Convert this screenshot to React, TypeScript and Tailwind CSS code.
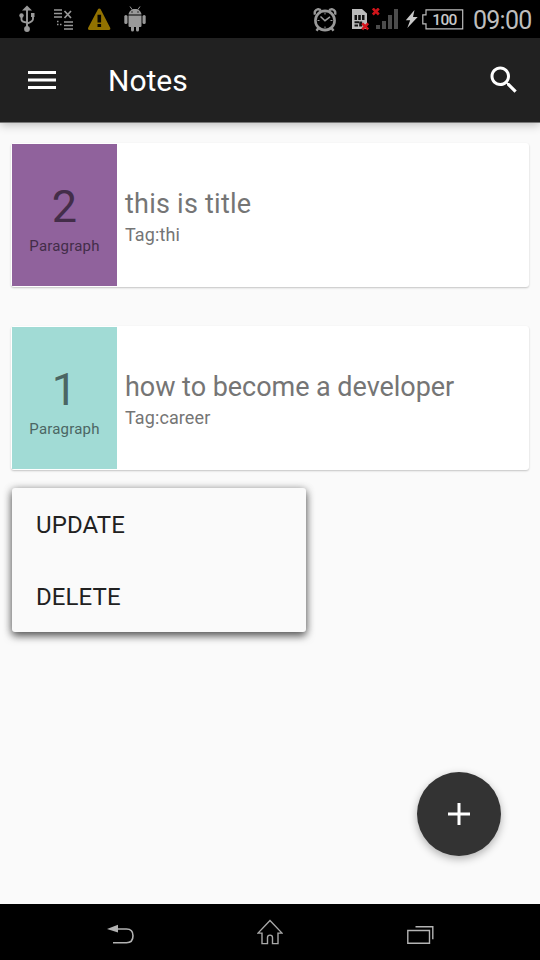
import React from "react";

const notes = [
  { count: 2, title: "this is title", tag: "thi", tile: "bg-[#90629c]", ink: "text-[#432d49]", spacing: "tracking-[0.24px]" },
  { count: 1, title: "how to become a developer", tag: "career", tile: "bg-[#a1dbd5]", ink: "text-[#4b6663]", spacing: "tracking-[-0.04px]" },
];

function UsbIcon() {
  return (
    <svg className="ml-[19px] h-7 w-4 shrink-0" viewBox="0 0 16 28" fill="#999" stroke="#999">
      <path d="M8 4v20M2.5 11v3.5q0 2.5 5.5 3M14 11v3q0 2.5-6 4.5" fill="none" strokeWidth="1.9" />
      <path d="M8 .5 13 5.5H3z" stroke="none" />
      <circle cx="8" cy="24" r="2.9" stroke="none" />
      <circle cx="2.5" cy="10.5" r="2.2" stroke="none" />
      <path d="M12 8h3.5v4H12z" stroke="none" />
    </svg>
  );
}

function TransferIcon() {
  return (
    <svg className="ml-[18px] mt-[2px] h-6 w-5 shrink-0" viewBox="0 0 20 24" stroke="#999" fill="none">
      <path d="M1 2h8M1 5.5h8M1 9h8M11 14h9M11 17.5h9M11 21h9" strokeWidth="1.6" />
      <path d="m11.5 3 6.5 7m0-7-6.5 7" strokeWidth="1.7" />
      <path d="M4 13.5h1.5M4 16.5h1.5M7 16.5h1.5" strokeWidth="1.5" />
    </svg>
  );
}

function WarningIcon() {
  return (
    <svg className="ml-[14px] h-[23px] w-6 shrink-0" viewBox="0 0 24 23">
      <path d="M12.3 2 21.8 20.5H2.5z" fill="#927200" stroke="#927200" strokeWidth="3" strokeLinejoin="round" />
      <path d="M10.5 6.7h3.6v7.8h-3.6zM10.5 16h3.6v3h-3.6z" fill="#080600" />
    </svg>
  );
}

function AndroidIcon() {
  return (
    <svg className="ml-[13px] h-[26px] w-[22px] shrink-0" viewBox="0 0 22 26" fill="#999">
      <path d="M4.5 8.5C5 5 7.5 3 11 3s6 2 6.5 5.5z" />
      <path d="m6 .5 2.2 3.2M16 .5l-2.2 3.2" stroke="#999" strokeWidth="1" />
      <path d="M4.5 9.5h13v10.2q0 1.2-1.2 1.2H15V24a1.5 1.5 0 0 1-3 0v-3.1h-2V24a1.5 1.5 0 0 1-3 0v-3.1H5.7q-1.2 0-1.2-1.2z" />
      <rect x=".3" y="9" width="3.2" height="9" rx="1.6" />
      <rect x="18.5" y="9" width="3.2" height="9" rx="1.6" />
      <circle cx="8" cy="6" r=".8" fill="#222" />
      <circle cx="14" cy="6" r=".8" fill="#222" />
    </svg>
  );
}

function AlarmIcon() {
  return (
    <svg className="ml-[167px] mt-[2px] h-6 w-6 shrink-0" viewBox="0 0 24 24" fill="none" stroke="#999">
      <circle cx="12" cy="12.5" r="9.6" strokeWidth="2.6" />
      <path d="M2 6.7Q.7 2.3 5.2 1.2L8 2.2M22 6.7q1.3-4.4-3.2-5.5L16 2.2" strokeWidth="2.4" />
      <path d="m7.5 8.5 4.5 4.2 5-3.8" strokeWidth="1.5" />
      <path d="M12 4.5v2M12 18.5v2M4.5 12.5h2M17.5 12.5h2" strokeWidth="1" />
      <path d="m5.5 20-2 2.8M18.5 20l2 2.8" strokeWidth="2.4" />
    </svg>
  );
}

function SimIcon() {
  return (
    <svg className="ml-[15px] h-[23px] w-[18px] shrink-0" viewBox="0 0 18 23">
      <path d="M0 1h10l5 4.5V21H0z" fill="#bcbcbc" />
      <path d="M2.5 7H5v5H2.5zM6.2 7h2.6v5H6.2zM10 7h2.5v5H10zM2.5 13.2H7v2H2.5zM2.5 16.5H6v2H2.5zM7.2 13.5h3v5h-3z" fill="#111" />
      <path d="m10.2 15.3 6 6m0-6-6 6" stroke="#d4141b" strokeWidth="2.6" />
    </svg>
  );
}

function SignalIcon() {
  return (
    <svg className="ml-[2px] h-[23px] w-[27px] shrink-0" viewBox="0 0 27 23">
      <path d="M4 17h4v4H4zM10 13h4v8h-4zM16 7h4v14h-4zM22 1h4v20h-4z" fill="#4c4c4c" />
      <path d="m.8 .5 6 6m0-6-6 6" stroke="#cf141a" strokeWidth="2.6" />
    </svg>
  );
}

function BatteryIcon() {
  return (
    <>
      <svg className="ml-[6px] h-5 w-[13px] shrink-0" viewBox="0 0 13 20" fill="#cacaca">
        <path d="M9.5 1 .8 11.2h4.4L2.3 19 12.7 8H8z" />
      </svg>
      <svg className="ml-[4px] h-[21px] w-[42px] shrink-0" viewBox="0 0 42 21">
        <path d="M4 .8h36.7v19H4v-5H.8v-9H4z" fill="none" stroke="#bdbdbd" strokeWidth="1.2" />
        <text x="22.5" y="16" textAnchor="middle" className="font-[Roboto,sans-serif] text-[15.5px] font-medium tracking-[-0.6px]" fill="#c8c8c8">100</text>
      </svg>
    </>
  );
}

function StatusBar() {
  return (
    <div className="flex h-[38px] shrink-0 items-center overflow-hidden bg-black">
      <UsbIcon />
      <TransferIcon />
      <WarningIcon />
      <AndroidIcon />
      <AlarmIcon />
      <SimIcon />
      <SignalIcon />
      <BatteryIcon />
      <span className="ml-[9px] mt-[3px] text-[25px] leading-[38px] tracking-[-0.75px] text-[#bebebe]">09:00</span>
    </div>
  );
}

export default function App() {
  return (
    <div className="relative flex h-[960px] w-[540px] flex-col overflow-hidden bg-[#fafafa] font-[Roboto,'Liberation_Sans',sans-serif]">
      <StatusBar />
      <header className="flex h-[84px] shrink-0 items-center bg-[#212121] text-white shadow-[0_1px_0_#777,0_3px_9px_rgba(0,0,0,0.25)]">
        <button aria-label="Open menu" className="ml-7">
          <svg className="h-7 w-7" viewBox="0 0 28 28" stroke="#fff" strokeWidth="3">
            <path d="M0 6.5h28M0 14h28M0 21.5h28" />
          </svg>
        </button>
        <h1 className="ml-[52px] mt-[2px] text-[30px] leading-9">Notes</h1>
        <button aria-label="Search" className="ml-auto mr-[18px]">
          <svg className="h-9 w-9" viewBox="0 0 24 24" fill="#fff">
            <path d="M15.5 14h-.79l-.28-.27C15.41 12.59 16 11.11 16 9.5 16 5.91 13.09 3 9.5 3S3 5.91 3 9.5 5.91 16 9.5 16c1.61 0 3.09-.59 4.23-1.57l.27.28v.79l5 4.99L20.49 19l-4.99-5zm-6 0C7.01 14 5 11.99 5 9.5S7.01 5 9.5 5 14 7.01 14 9.5 11.99 14 9.5 14z" />
          </svg>
        </button>
      </header>
      <main className="flex flex-1 flex-col px-[11px] pt-[21px]">
        <div className="flex flex-col gap-[39px]">
          {notes.map((note) => (
            <article key={note.title} className="flex h-[144px] rounded-[3px] bg-white p-px shadow-[0_1px_2px_rgba(0,0,0,0.22)]">
              <div className={`flex w-[105px] flex-col items-center ${note.tile} ${note.ink}`}>
                <span className="mt-[36px] text-[45px] leading-[53px]">{note.count}</span>
                <span className="mt-[3px] text-[15px] leading-5 tracking-[0.2px]">Paragraph</span>
              </div>
              <div className="pl-2 pt-[44px] text-[#757575]">
                <h2 className={`text-[27px] leading-8 ${note.spacing}`}>{note.title}</h2>
                <p className="mt-[4px] text-[18px] leading-[22px] tracking-[0.1px]">Tag:{note.tag}</p>
              </div>
            </article>
          ))}
        </div>
        <div className="ml-px mt-[18px] flex h-[144px] w-[294px] flex-col rounded-[3px] bg-[#fafafa] text-[24px] tracking-[0.1px] text-[#212121] shadow-[0_4px_8px_rgba(0,0,0,0.55),0_1px_8px_rgba(0,0,0,0.3)]">
          <button className="h-[72px] pl-6 pt-[2px] text-left">UPDATE</button>
          <button className="h-[72px] pl-6 pt-[2px] text-left">DELETE</button>
        </div>
      </main>
      <button aria-label="Add note" className="absolute left-[417px] top-[772px] flex size-[84px] items-center justify-center rounded-full bg-[#333] shadow-[0_3px_8px_rgba(0,0,0,0.3)]">
        <svg className="h-[22px] w-[22px]" viewBox="0 0 22 22" stroke="#fff" strokeWidth="3">
          <path d="M0 11h22M11 0v22" />
        </svg>
      </button>
      <nav className="flex h-[56px] shrink-0 items-start bg-black pt-[15px]">
        <svg className="ml-[107px] h-[26px] w-[27px]" viewBox="0 0 27 26">
          <path d="M9 10.5h10.5C24 10.5 26 13 26 17.2s-2 7-6.5 7H6" transform="translate(0 -.5)" fill="none" stroke="#b2b2b2" strokeWidth="1.6" />
          <path d="m0 9.9 11-4.1v7.8z" fill="#b2b2b2" />
        </svg>
        <svg className="ml-[123px] h-[26px] w-[26px]" viewBox="0 0 26 26" fill="none" stroke="#a8a8a8" strokeWidth="1.4">
          <path d="M13 1 1 13.5h4V24h5.5v-6q0-2.5 2.5-2.5t2.5 2.5v6H21V13.5h4z" transform="translate(0 .6)" />
        </svg>
        <svg className="ml-[124px] h-[26px] w-[27px]" viewBox="0 0 27 26" fill="none" stroke="#b4b4b4" strokeWidth="1.4">
          <path d="M.8 11.5h21.7v12.7H.8zM8.5 7.7h17.3v12.5" />
        </svg>
      </nav>
    </div>
  );
}
